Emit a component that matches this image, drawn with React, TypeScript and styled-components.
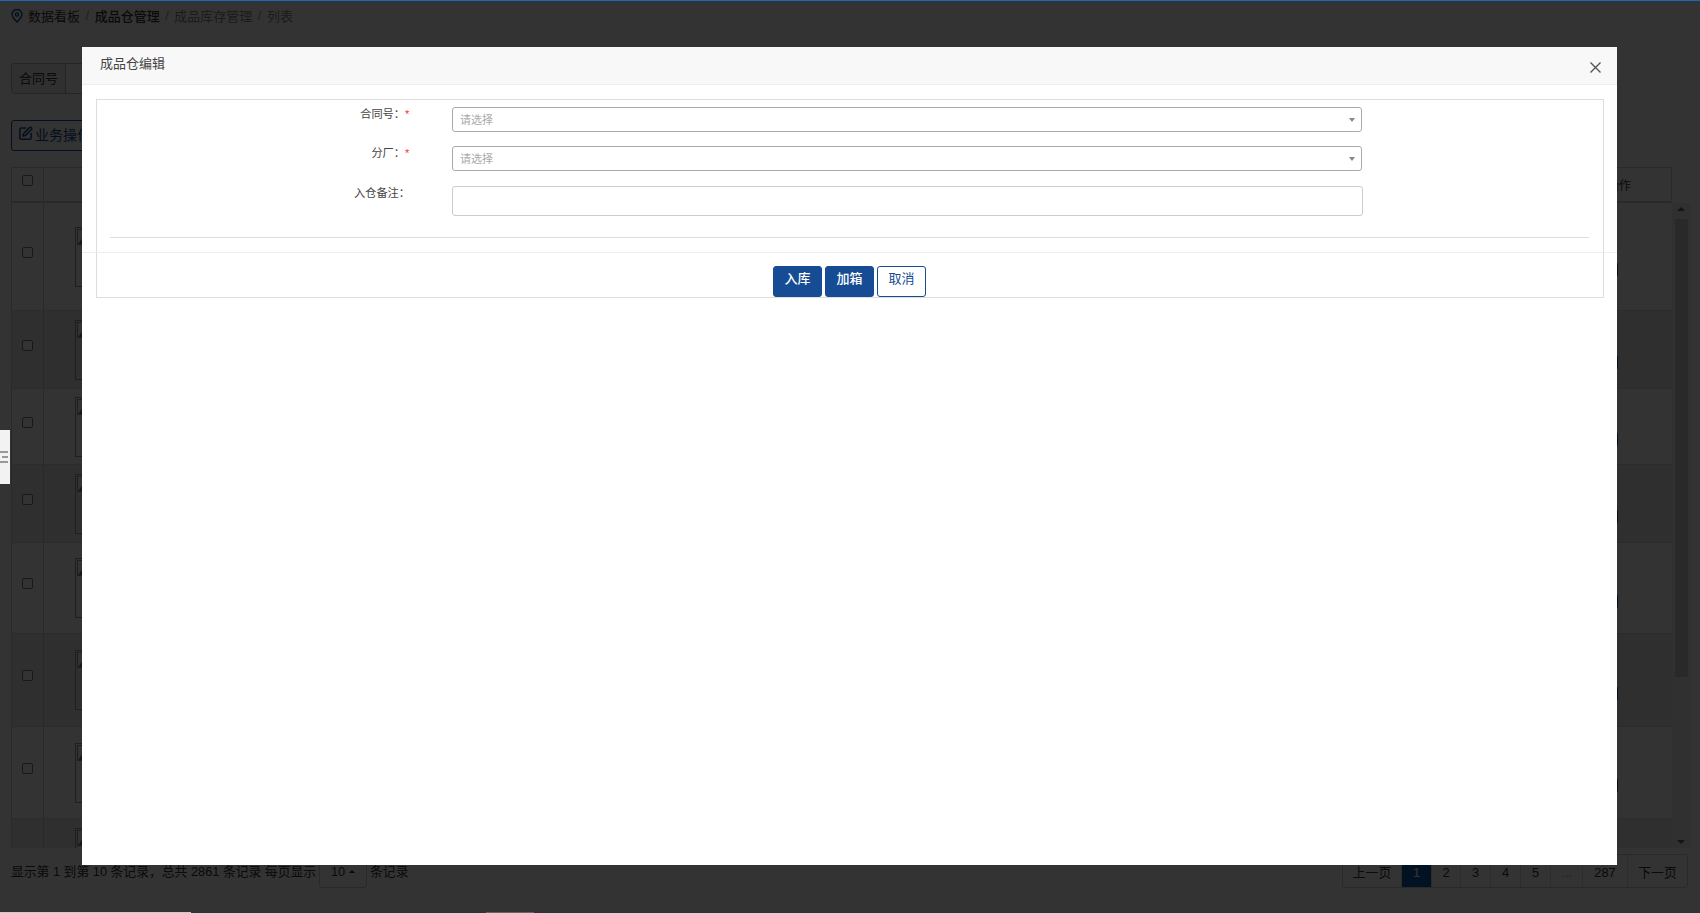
import * as React from "react";
import styled, { createGlobalStyle } from "styled-components";
import { SquarePen } from "lucide-react";

const GlobalStyle = createGlobalStyle`
  html, body {
    margin: 0;
    padding: 0;
    background: #fff;
    overflow: hidden;
  }
  * {
    box-sizing: border-box;
  }
  body {
    font-family: "Liberation Sans", "Noto Sans CJK SC", sans-serif;
    color: #333;
  }
`;

const Page = styled.div`
  width: 1700px;
  height: 913px;
  padding: 0 12px 0 11px;
  display: flex;
  flex-direction: column;
  overflow: hidden;
`;

const Crumbs = styled.div`
  height: 30px;
  display: flex;
  align-items: center;
  font-size: 13px;
`;

const CrumbPin = styled.svg`
  width: 12px;
  height: 14px;
  margin: 2px 5px 0 0;
`;

const Crumb = styled.span<{ $muted?: boolean; $strong?: boolean }>`
  color: ${props => (props.$muted ? "#888" : "#333")};
  font-weight: ${props => (props.$strong ? 500 : 400)};
`;

const CrumbSlash = styled.span`
  color: #999;
  margin: 0 5.500px;
`;

const SearchRow = styled.div`
  margin-top: 33px;
  height: 31px;
  width: 420px;
  display: flex;
  border: 1px solid #bbb;
  border-radius: 3px;
`;

const SearchAddon = styled.div`
  width: 54px;
  padding-bottom: 3px;
  display: flex;
  align-items: center;
  justify-content: center;
  font-size: 13px;
  background: #eee;
  border-right: 1px solid #bbb;
`;

const BusinessButton = styled.div`
  margin-top: 26px;
  height: 31px;
  width: 110px;
  padding: 0 0 4px 6px;
  display: flex;
  align-items: center;
  gap: 2px;
  border: 1px solid #154c94;
  border-radius: 3px;
  color: #154c94;
  font-size: 14px;
`;

const Table = styled.div`
  margin-top: 16px;
  margin-right: -2px;
  display: grid;
  grid-template-columns: 1fr 18px;
  grid-template-rows: 36px 645px;
`;

const HeaderRow = styled.div`
  grid-column: 1;
  display: flex;
  align-items: center;
  border: 1px solid #ccc;
  border-bottom-width: 2px;
`;

const CheckCell = styled.div`
  width: 32px;
  align-self: stretch;
  flex: none;
  display: flex;
  align-items: center;
  justify-content: center;
  border-right: 1px solid #ccc;
`;

const Check = styled.span`
  width: 11px;
  height: 11px;
  margin-bottom: 9px;
  border: 1px solid #777;
  border-radius: 2px;
  background: #fff;
`;

const HeaderAction = styled.div`
  margin-left: auto;
  margin-right: 40px;
  font-size: 12px;
`;

const Rows = styled.div`
  grid-column: 1;
  overflow: hidden;
  border-left: 1px solid #ccc;
`;

const Row = styled.div<{ $alt: boolean; $height: number }>`
  height: ${props => props.$height}px;
  display: flex;
  align-items: center;
  background: ${props => (props.$alt ? "#ebebeb" : "#fff")};
  border-bottom: 1px solid #ddd;
`;

const ImageCell = styled.div`
  flex: 1;
  padding-left: 31px;
`;

const BrokenImage = styled.div`
  width: 200px;
  height: 60px;
  padding: 1px;
  border: 1px solid #999;
`;

const BrokenGlyph = styled.svg`
  display: block;
  width: 16px;
  height: 16px;
`;

const RowAction = styled.div`
  width: 60px;
  height: 15px;
  margin: 26px 54px 0 0;
  background: #154c94;
  border-radius: 3px;
`;

const ScrollTrack = styled.div`
  grid-column: 2;
  grid-row: 2;
  background: #f1f1f1;
  display: flex;
  flex-direction: column;
  align-items: center;
  justify-content: space-between;
  padding: 4px 0;
`;

const ScrollArrow = styled.span<{ $down?: boolean }>`
  width: 0;
  height: 0;
  border-left: 4px solid transparent;
  border-right: 4px solid transparent;
  border-bottom: ${props => (props.$down ? "0" : "4px solid #666")};
  border-top: ${props => (props.$down ? "4px solid #666" : "0")};
`;

const ScrollThumb = styled.div`
  width: 13px;
  height: 458px;
  margin-top: 8px;
  margin-bottom: auto;
  background: #ccc;
`;

const Footer = styled.div`
  margin-top: 6px;
  height: 34px;
  display: flex;
  justify-content: space-between;
  font-size: 12.800px;
  line-height: 35px;
`;

const Summary = styled.div`
  display: flex;
  gap: 3px;
`;

const SizeSelect = styled.div`
  width: 48px;
  display: flex;
  align-items: center;
  justify-content: center;
  gap: 4px;
  border: 1px solid #ccc;
  border-radius: 3px;
`;

const SizeCaret = styled.span`
  width: 0;
  height: 0;
  border-left: 3px solid transparent;
  border-right: 3px solid transparent;
  border-bottom: 3px solid #333;
`;

const Pager = styled.div`
  display: flex;
  border: 1px solid #ccc;
  border-radius: 3px;
`;

const PageItem = styled.div<{ $width: number; $active?: boolean; $muted?: boolean }>`
  width: ${props => props.$width}px;
  text-align: center;
  border-right: 1px solid #ddd;
  background: ${props => (props.$active ? "#0f5ab0" : "transparent")};
  color: ${props => (props.$active ? "#fff" : props.$muted ? "#999" : "#333")};
  &:last-child {
    border-right: 0;
  }
`;

const Backdrop = styled.div`
  position: fixed;
  inset: 0;
  background: rgba(0, 0, 0, 0.8);
`;

const TopLine = styled.div`
  position: fixed;
  top: 0;
  left: 0;
  right: 0;
  height: 1px;
  background: #1d66b8;
`;

const SideToggle = styled.div`
  position: fixed;
  top: 430px;
  left: 0;
  width: 10px;
  height: 54px;
  background: #f2f2f2;
  display: flex;
  flex-direction: column;
  align-items: flex-end;
  justify-content: center;
  gap: 3px;
  padding: 0 2px 0 0;
`;

const ToggleBar = styled.span<{ $short?: boolean }>`
  width: ${props => (props.$short ? 6 : 8)}px;
  height: 2px;
  background: #999;
`;

const BottomStrip = styled.div`
  position: fixed;
  left: 0;
  right: 0;
  bottom: 0;
  height: 1px;
  display: flex;
  background: #1e3a3e;
`;

const StripPart = styled.span<{ $width: number; $gap?: number; $color: string }>`
  width: ${props => props.$width}px;
  margin-left: ${props => props.$gap || 0}px;
  background: ${props => props.$color};
`;

const Modal = styled.div`
  position: fixed;
  top: 47px;
  left: 82px;
  width: 1535px;
  height: 818px;
  background: #fff;
  display: flex;
  flex-direction: column;
`;

const ModalHeader = styled.div`
  height: 38px;
  flex: none;
  display: flex;
  align-items: center;
  justify-content: space-between;
  padding: 0 16px 7px 18px;
  background: #f8f8f8;
  border-bottom: 1px solid #eee;
  color: #444;
  font-size: 13px;
`;

const CloseIcon = styled.svg`
  width: 11px;
  height: 11px;
  margin-top: 11px;
`;

const ModalBody = styled.div`
  padding: 14px 13px 0 14px;
`;

const Panel = styled.div`
  border: 1px solid #ddd;
  padding-top: 7px;
`;

const FormRow = styled.div<{ $gap: number }>`
  display: flex;
  margin-bottom: ${props => props.$gap}px;
`;

const FieldLabel = styled.div`
  width: 313px;
  margin-right: 42px;
  display: flex;
  justify-content: flex-end;
  font-size: 11.200px;
  line-height: 14px;
  color: #444;
`;

const Required = styled.span`
  width: 5px;
  color: #f33;
`;

const SelectBox = styled.div`
  position: relative;
  width: 910px;
  height: 25px;
  padding-left: 7px;
  border: 1px solid #aaa;
  border-radius: 3px;
  font-size: 11px;
  line-height: 25px;
  color: #aaa;
`;

const SelectCaret = styled.span`
  position: absolute;
  top: 10px;
  right: 6px;
  width: 0;
  height: 0;
  border-left: 3.500px solid transparent;
  border-right: 3.500px solid transparent;
  border-top: 4px solid #888;
`;

const NoteInput = styled.input`
  display: block;
  width: 911px;
  height: 30px;
  border: 1px solid #ccc;
  border-radius: 3px;
  outline: 0;
`;

const Divider = styled.div`
  height: 1px;
  margin: 0 14px 0 13px;
  background: #ddd;
`;

const ModalActions = styled.div`
  margin: 14px -14px 0 -15px;
  padding-top: 13px;
  height: 45px;
  display: flex;
  justify-content: center;
  gap: 3px;
  border-top: 1px solid #eee;
`;

const ActionButton = styled.button<{ $outline?: boolean }>`
  width: 49px;
  height: 31px;
  padding: 0 0 9px;
  border: 1px solid #154c94;
  border-radius: 3px;
  background: ${props => (props.$outline ? "#fff" : "#154c94")};
  color: ${props => (props.$outline ? "#154c94" : "#fff")};
  font-family: inherit;
  font-size: 13px;
  font-weight: ${props => (props.$outline ? 400 : 500)};
`;

const rowHeights = [108, 78, 76, 78, 91, 93, 92, 78];
const pages: [string, number][] = [
  ["上一页", 59],
  ["1", 30],
  ["2", 29],
  ["3", 30],
  ["4", 30],
  ["5", 30],
  ["...", 32],
  ["287", 45],
  ["下一页", 59],
];

export default function App() {
  return (
    <>
      <GlobalStyle />
      <Page>
        <Crumbs>
          <CrumbPin viewBox="0 0 12 14" fill="none" stroke="#154c94" strokeWidth="1.4">
            <path d="M6 13C3 10 1 8 1 5.500a5 5 0 0 1 10 0C11 8 9 10 6 13z" />
            <circle cx="6" cy="5.500" r="1.600" />
          </CrumbPin>
          <Crumb>数据看板</Crumb>
          <CrumbSlash>/</CrumbSlash>
          <Crumb $strong>成品仓管理</Crumb>
          <CrumbSlash>/</CrumbSlash>
          <Crumb $muted>成品库存管理</Crumb>
          <CrumbSlash>/</CrumbSlash>
          <Crumb $muted>列表</Crumb>
        </Crumbs>
        <SearchRow>
          <SearchAddon>合同号</SearchAddon>
        </SearchRow>
        <BusinessButton>
          <SquarePen size={15} strokeWidth={2.4} />
          业务操作
        </BusinessButton>
        <Table>
          <HeaderRow>
            <CheckCell>
              <Check />
            </CheckCell>
            <HeaderAction>操作</HeaderAction>
          </HeaderRow>
          <Rows>
            {rowHeights.map((height, i) => (
              <Row key={i} $alt={i % 2 === 1} $height={height}>
                <CheckCell>
                  <Check />
                </CheckCell>
                <ImageCell>
                  <BrokenImage>
                    <BrokenGlyph viewBox="0 0 16 16">
                      <rect x="0.500" y="0.500" width="15" height="15" fill="#fff" stroke="#999" />
                      <path d="M1 15 L7 7 L11 11 L15 8 V15 Z" fill="#3a9a3a" />
                    </BrokenGlyph>
                  </BrokenImage>
                </ImageCell>
                <RowAction />
              </Row>
            ))}
          </Rows>
          <ScrollTrack>
            <ScrollArrow />
            <ScrollThumb />
            <ScrollArrow $down />
          </ScrollTrack>
        </Table>
        <Footer>
          <Summary>
            显示第 1 到第 10 条记录，总共 2861 条记录 每页显示
            <SizeSelect>
              10
              <SizeCaret />
            </SizeSelect>
            条记录
          </Summary>
          <Pager>
            {pages.map(([label, width]) => (
              <PageItem key={label} $width={width} $active={label === "1"} $muted={label === "..."}>
                {label}
              </PageItem>
            ))}
          </Pager>
        </Footer>
      </Page>
      <Backdrop />
      <TopLine />
      <SideToggle>
        <ToggleBar />
        <ToggleBar $short />
        <ToggleBar />
      </SideToggle>
      <BottomStrip>
        <StripPart $width={191} $color="#ccc" />
        <StripPart $width={48} $gap={295} $color="#666" />
      </BottomStrip>
      <Modal>
        <ModalHeader>
          成品仓编辑
          <CloseIcon viewBox="0 0 11 11" fill="none" stroke="#555" strokeWidth="1.4">
            <path d="M0.500 0.500 L10.500 10.500 M10.500 0.500 L0.500 10.500" />
          </CloseIcon>
        </ModalHeader>
        <ModalBody>
          <Panel>
            <FormRow $gap={14}>
              <FieldLabel>
                合同号：<Required>*</Required>
              </FieldLabel>
              <SelectBox>
                请选择
                <SelectCaret />
              </SelectBox>
            </FormRow>
            <FormRow $gap={15}>
              <FieldLabel>
                分厂：<Required>*</Required>
              </FieldLabel>
              <SelectBox>
                请选择
                <SelectCaret />
              </SelectBox>
            </FormRow>
            <FormRow $gap={21}>
              <FieldLabel>入仓备注：</FieldLabel>
              <NoteInput />
            </FormRow>
            <Divider />
            <ModalActions>
              <ActionButton>入库</ActionButton>
              <ActionButton>加箱</ActionButton>
              <ActionButton $outline>取消</ActionButton>
            </ModalActions>
          </Panel>
        </ModalBody>
      </Modal>
    </>
  );
}
